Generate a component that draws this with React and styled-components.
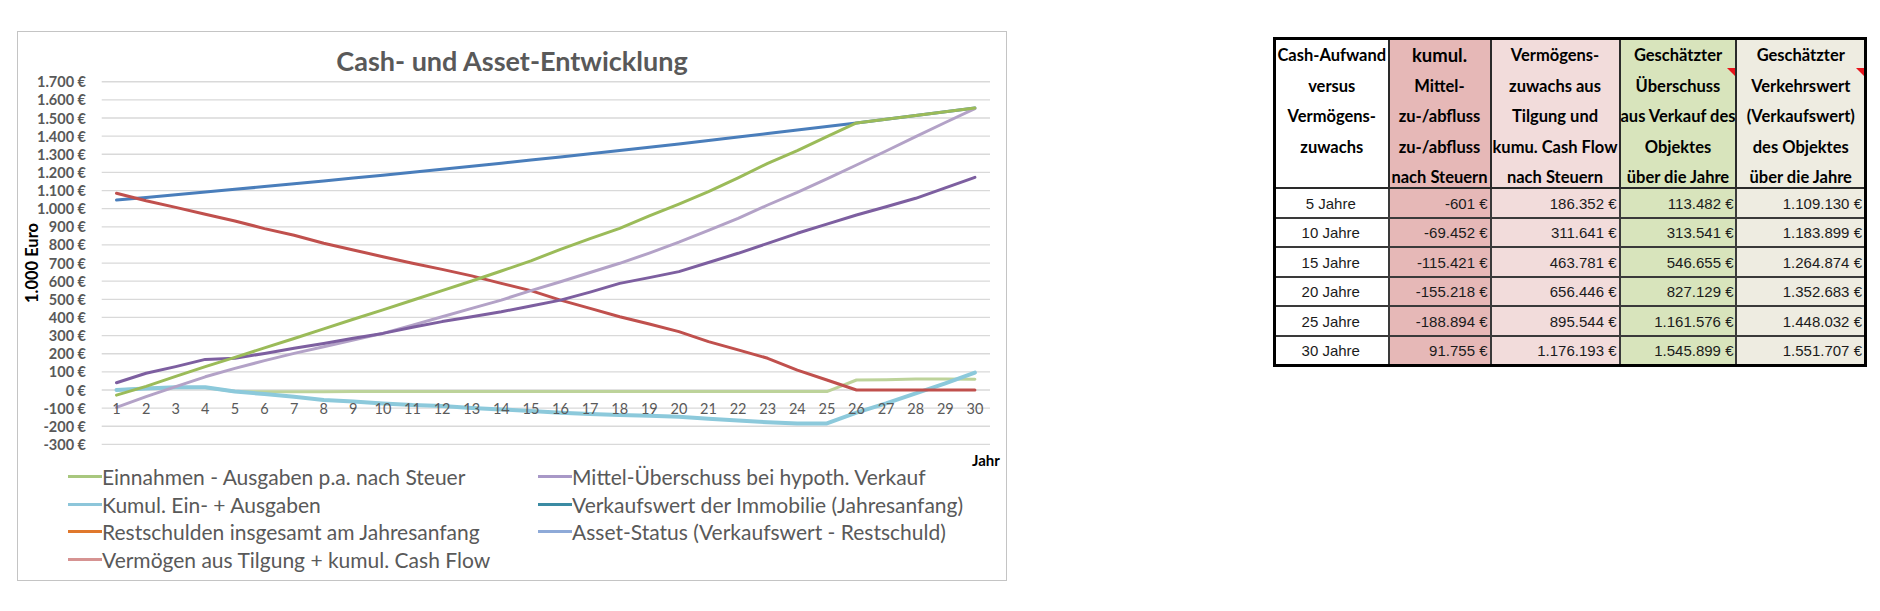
import React from 'react';
import styled, { createGlobalStyle } from 'styled-components';

const GlobalStyle = createGlobalStyle`
  body {
    margin: 0;
    background: #fff;
  }
`;

const Page = styled.div`
  display: flex;
  align-items: flex-start;
  gap: 266px;
  padding: 31px 0 0 17px;
`;

// ---------- chart ----------

const ChartFrame = styled.div`
  width: 990px;
  height: 550px;
  box-sizing: border-box;
  border: 1px solid #c4c4c4;
  display: flex;
  flex-direction: column;
  flex: none;
`;

const ChartTitle = styled.div`
  height: 44px;
  box-sizing: border-box;
  padding-top: 14px;
  line-height: 30px;
  text-align: center;
  font-family: Lato, sans-serif;
  font-weight: 700;
  font-size: 27px;
  color: #595959;
`;

const Plot = styled.svg`
  display: block;
  overflow: visible;
`;

const AxisLabel = styled.text`
  font-family: Lato, sans-serif;
  font-weight: 700;
  font-size: 14.5px;
  fill: #595959;
`;

const CategoryLabel = styled.text`
  font-family: Lato, sans-serif;
  font-size: 14.5px;
  fill: #595959;
`;

const AxisTitle = styled.text`
  font-family: Lato, sans-serif;
  font-weight: 700;
  font-size: ${p => p.$size || 15}px;
  fill: #000;
`;

const Legend = styled.div`
  display: grid;
  grid-template-columns: 470px auto;
  grid-auto-rows: 27.5px;
  padding-left: 50px;
  margin-top: -7px;
`;

const LegendItem = styled.div`
  display: flex;
  align-items: center;
  font-family: Lato, sans-serif;
  font-size: 21px;
  color: #595959;
  white-space: nowrap;
`;

const Swatch = styled.span`
  width: 34px;
  height: 3px;
  flex: none;
  background: ${p => p.$color};
`;

// ---------- table ----------

const Table = styled.table`
  margin-top: 6px;
  border-collapse: collapse;
  table-layout: fixed;
  border: 3px solid #000;
  flex: none;
`;

const HeadCell = styled.th`
  position: relative;
  width: ${p => p.$w}px;
  padding: 0;
  box-sizing: border-box;
  vertical-align: top;
  background: ${p => p.$bg};
  border: 2px solid #2a2a2a;
  white-space: nowrap;
  text-align: center;
  font-family: Lato, sans-serif;
  font-weight: 700;
  font-size: 16.5px;
  color: #000;
`;

const HeadInner = styled.div`
  overflow: hidden;
`;

const HeadLine = styled.div`
  height: 30.6px;
  line-height: 30.6px;
  font-size: ${p => (p.$big ? '18.5px' : 'inherit')};

  &:nth-child(5) {
    height: 25px;
    box-sizing: border-box;
    padding-top: 5px;
    line-height: 20px;
  }
`;

const CommentMark = styled.span`
  position: absolute;
  top: 28px;
  right: 0;
  width: 0;
  height: 0;
  border-top: 8px solid #e8141b;
  border-left: 8px solid transparent;
`;

const DataCell = styled.td`
  height: 29.5px;
  padding: 0 2px 0 0;
  box-sizing: border-box;
  background: ${p => p.$bg};
  border: 2px solid #3a3a3a;
  text-align: ${p => (p.$first ? 'center' : 'right')};
  font-family: 'Liberation Sans', Arial, sans-serif;
  font-size: 15px;
  color: #1b1b1b;
  white-space: nowrap;
`;

// ---------- data ----------

const X0 = 101.7;
const X1 = 990;
const STEP = 29.6;
const Y0 = 390;
const K = 0.18133;

const xAt = i => X0 + STEP * (i + 0.5);
const yAt = v => Y0 - v * K;

const blue = Array.from({ length: 30 }, (_, i) => 1048 * Math.pow(1.01371, i));

const series = [
  {
    color: '#bdd39a',
    width: 3,
    values: [0, 10, 13, 13, -8, -10, -10, -10, -9, -9, -9, -9, -9, -9, -9, -9, -9, -9, -9, -9, -9, -9, -9, -9, -9, 55, 56, 60, 60, 59],
  },
  {
    color: '#8cc9db',
    width: 4,
    values: [0, 9, 15, 15, -9, -22, -37, -55, -64, -74, -83, -88, -99, -107, -115, -125, -132, -138, -142, -147, -158, -169, -178, -184, -184, -125, -74, -18, 37, 96],
  },
  { color: '#4a7ebb', width: 3, values: blue },
  {
    color: '#c0504d',
    width: 3,
    values: [1085, 1044, 1007, 969, 932, 890, 853, 809, 772, 735, 699, 665, 629, 588, 548, 496, 450, 404, 364, 322, 267, 221, 175, 110, 55, 0, 0, 0, 0, 0],
  },
  {
    color: '#b3a2c7',
    width: 3,
    values: [-96, -37, 18, 73, 119, 162, 202, 239, 276, 312, 358, 404, 450, 496, 548, 597, 648, 699, 755, 815, 880, 947, 1020, 1090, 1165, 1241, 1318, 1397, 1475, 1552],
  },
  {
    color: '#7d5fa0',
    width: 3,
    values: [40, 92, 129, 169, 175, 202, 230, 257, 285, 312, 346, 377, 404, 432, 463, 496, 540, 588, 620, 653, 703, 754, 809, 864, 915, 965, 1011, 1057, 1115, 1173],
  },
  {
    color: '#9bbb59',
    width: 3,
    values: [-28, 20, 75, 129, 180, 232, 284, 337, 390, 442, 495, 548, 601, 656, 712, 776, 835, 892, 960, 1025, 1094, 1170, 1250, 1320, 1397, ...blue.slice(25)],
  },
];

const legendItems = [
  { color: '#a8c77e', label: 'Einnahmen - Ausgaben p.a. nach Steuer' },
  { color: '#a898c7', label: 'Mittel-Überschuss bei hypoth. Verkauf' },
  { color: '#8dc6da', label: 'Kumul. Ein- + Ausgaben' },
  { color: '#3b8ba3', label: 'Verkaufswert der Immobilie (Jahresanfang)' },
  { color: '#e0782c', label: 'Restschulden insgesamt am Jahresanfang' },
  { color: '#8eaad8', label: 'Asset-Status (Verkaufswert - Restschuld)' },
  { color: '#d69392', label: 'Vermögen aus Tilgung + kumul. Cash Flow' },
];

const ticks = Array.from({ length: 21 }, (_, i) => 1700 - i * 100);

const euro = v => {
  const s = String(Math.abs(v)).replace(/\B(?=(\d{3})+(?!\d))/g, '.');
  return `${v < 0 ? '-' : ''}${s} €`;
};

const columns = [
  { w: 114, bg: '#ffffff', lines: ['Cash-Aufwand', 'versus', 'Vermögens-', 'zuwachs'] },
  { w: 102, bg: '#e6b8b7', lines: ['kumul.', 'Mittel-', 'zu-/abfluss', 'zu-/abfluss', 'nach Steuern'] },
  { w: 129, bg: '#f2dcdb', lines: ['Vermögens-', 'zuwachs aus', 'Tilgung und', 'kumu. Cash Flow', 'nach Steuern'] },
  { w: 114, bg: '#d8e4bc', lines: ['Geschätzter', 'Überschuss', 'aus Verkauf des', 'Objektes', 'über die Jahre'], comment: true },
  { w: 129, bg: '#eeece1', lines: ['Geschätzter', 'Verkehrswert', '(Verkaufswert)', 'des Objektes', 'über die Jahre'], comment: true },
];

const rows = [
  ['5 Jahre', '-601 €', '186.352 €', '113.482 €', '1.109.130 €'],
  ['10 Jahre', '-69.452 €', '311.641 €', '313.541 €', '1.183.899 €'],
  ['15 Jahre', '-115.421 €', '463.781 €', '546.655 €', '1.264.874 €'],
  ['20 Jahre', '-155.218 €', '656.446 €', '827.129 €', '1.352.683 €'],
  ['25 Jahre', '-188.894 €', '895.544 €', '1.161.576 €', '1.448.032 €'],
  ['30 Jahre', '91.755 €', '1.176.193 €', '1.545.899 €', '1.551.707 €'],
];

const CashChart = () => (
  <ChartFrame>
    <ChartTitle>Cash- und Asset-Entwicklung</ChartTitle>
    <Plot width="988" height="394" viewBox="18 76 988 394">
      {ticks.map(v => (
        <line key={v} x1={X0} x2={X1} y1={yAt(v)} y2={yAt(v)} stroke="#d9d9d9" strokeWidth="1.3" />
      ))}
      {ticks.map(v => (
        <AxisLabel key={v} x="86" y={yAt(v)} textAnchor="end" dominantBaseline="central">
          {euro(v)}
        </AxisLabel>
      ))}
      <AxisTitle $size={16.5} x="32" y="263" transform="rotate(-90 32 263)" textAnchor="middle" dominantBaseline="central">
        1.000 Euro
      </AxisTitle>
      {series.map((s, idx) => (
        <polyline
          key={idx}
          fill="none"
          stroke={s.color}
          strokeWidth={s.width}
          strokeLinejoin="round"
          strokeLinecap="round"
          points={s.values.map((v, i) => `${xAt(i).toFixed(1)},${yAt(v).toFixed(1)}`).join(' ')}
        />
      ))}
      {Array.from({ length: 30 }, (_, i) => (
        <CategoryLabel key={i} x={xAt(i)} y="408" textAnchor="middle" dominantBaseline="central">
          {i + 1}
        </CategoryLabel>
      ))}
      <AxisTitle x="986" y="466" textAnchor="middle">Jahr</AxisTitle>
    </Plot>
    <Legend>
      {legendItems.map(item => (
        <LegendItem key={item.label}>
          <Swatch $color={item.color} />
          {item.label}
        </LegendItem>
      ))}
    </Legend>
  </ChartFrame>
);

const SummaryTable = () => (
  <Table>
    <thead>
      <tr>
        {columns.map((c, ci) => (
          <HeadCell key={ci} $w={c.w} $bg={c.bg}>
            <HeadInner>
              {c.lines.map((l, li) => (
                <HeadLine key={li} $big={ci === 1 && li === 0}>{l}</HeadLine>
              ))}
            </HeadInner>
            {c.comment && <CommentMark />}
          </HeadCell>
        ))}
      </tr>
    </thead>
    <tbody>
      {rows.map(r => (
        <tr key={r[0]}>
          {r.map((cell, ci) => (
            <DataCell key={ci} $bg={columns[ci].bg} $first={ci === 0}>
              {cell}
            </DataCell>
          ))}
        </tr>
      ))}
    </tbody>
  </Table>
);

export default function App() {
  return (
    <>
      <GlobalStyle />
      <Page>
        <CashChart />
        <SummaryTable />
      </Page>
    </>
  );
}
